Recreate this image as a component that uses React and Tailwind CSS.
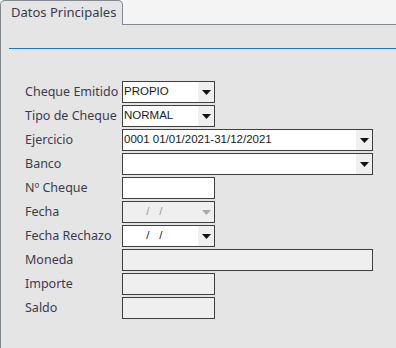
const labelFont = { fontFamily: '"Noto Sans", "Open Sans", sans-serif' };
const valueFont = { fontFamily: '"Liberation Sans", Arial, sans-serif' };

const EMPTY_DATE = "\u00a0\u00a0\u00a0\u00a0\u00a0\u00a0\u00a0/\u00a0\u00a0\u00a0/";

function Arrow({ disabled }) {
  return (
    <div className="ml-auto flex h-full w-[16px] items-center justify-center bg-[#efefef]">
      <svg width="9" height="5" viewBox="0 0 9 5">
        <path d="M0 0 H9 L4.5 5 Z" fill={disabled ? "#a8a8a8" : "#111"} />
      </svg>
    </div>
  );
}

function Field({ wide, value, select, disabled, readonly, muted }) {
  const bg = disabled || readonly ? "bg-[#efefef]" : "bg-white";
  return (
    <div
      className={`flex h-[22px] items-center border border-[#3f3f3f] ${bg} ${wide ? "w-[251px]" : "w-[93px]"}`}
      style={valueFont}
    >
      {value && (
        <span className={`pl-[1px] text-[11.5px] leading-none ${muted ? "text-[#9a9a9a]" : "text-[#1a1a1a]"}`}>
          {value}
        </span>
      )}
      {select && <Arrow disabled={disabled} />}
    </div>
  );
}

function Row({ label, children }) {
  return (
    <div className="mb-[2px] flex h-[22px] items-center">
      <div className="w-[121px] pl-[24px] text-[12.5px] text-[#3b3b4d]" style={labelFont}>
        {label}
      </div>
      {children}
    </div>
  );
}

export default function App() {
  return (
    <div className="flex h-[348px] w-[396px] flex-col bg-[#f4f4f4]">
      <div className="flex h-[25px]">
        <div
          className="flex w-[123px] items-center rounded-t-[5px] border border-b-0 border-[#7c8a94] bg-[#e5e5e5] pl-[10px] text-[13px] text-[#3a3a4c]"
          style={labelFont}
        >
          Datos Principales
        </div>
        <div className="flex-1 border-b border-[#7c8a94]" />
      </div>
      <div className="flex-1 border-l border-[#7c8a94] bg-[#e5e5e5]">
        <div className="ml-[8px] mt-[23px] h-px bg-[#1b74cc]" />
        <div className="mt-[32px]">
          <Row label="Cheque Emitido">
            <Field value="PROPIO" select />
          </Row>
          <Row label="Tipo de Cheque">
            <Field value="NORMAL" select />
          </Row>
          <Row label="Ejercicio">
            <Field wide value="0001 01/01/2021-31/12/2021" select />
          </Row>
          <Row label="Banco">
            <Field wide select />
          </Row>
          <Row label="Nº Cheque">
            <Field />
          </Row>
          <Row label="Fecha">
            <Field value={EMPTY_DATE} select disabled muted />
          </Row>
          <Row label="Fecha Rechazo">
            <Field value={EMPTY_DATE} select />
          </Row>
          <Row label="Moneda">
            <Field wide readonly />
          </Row>
          <Row label="Importe">
            <Field readonly />
          </Row>
          <Row label="Saldo">
            <Field readonly />
          </Row>
        </div>
      </div>
    </div>
  );
}
